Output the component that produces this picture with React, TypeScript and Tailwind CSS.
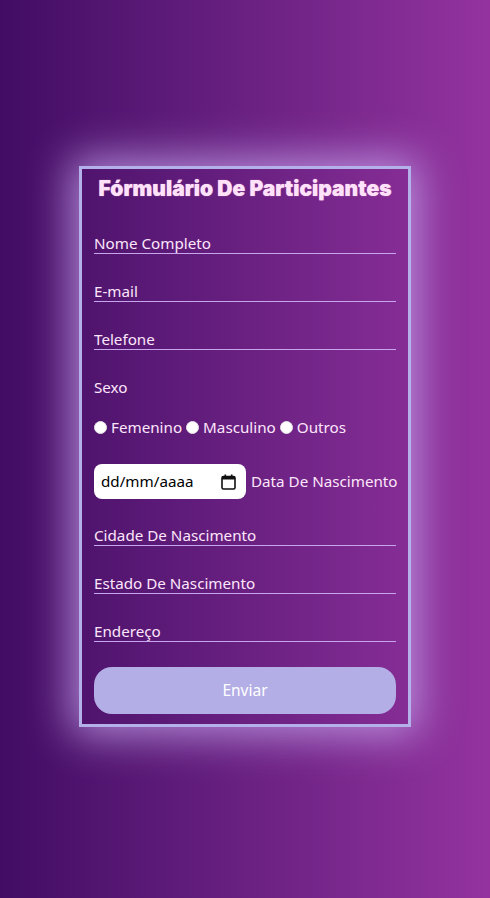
const fields1 = ['Nome Completo', 'E-mail', 'Telefone'];
const fields2 = ['Cidade De Nascimento', 'Estado De Nascimento', 'Endereço'];

const TextField = ({ label, mt }: { label: string; mt: string }) => (
  <input
    type="text"
    placeholder={label}
    className={`block w-full h-[22px] bg-transparent border-0 border-b border-[#c8a6ee] text-[15.2px] leading-[20px] text-[#fde6fb] placeholder:text-[#fde6fb] outline-none p-0 ${mt}`}
  />
);

const Radio = ({ label }: { label: string }) => (
  <label className="flex items-center gap-[4px]">
    <input type="radio" name="sexo" className="appearance-none w-[13px] h-[13px] rounded-full bg-white border border-[#e5e5e5] m-0" />
    <span>{label}</span>
  </label>
);

export default function App() {
  return (
    <div
      className="min-h-[898px] w-full bg-gradient-to-r from-[#420c64] to-[#94339f] flex justify-center pt-[166px] text-[#fde6fb]"
      style={{ fontFamily: '"Noto Sans", "Open Sans", sans-serif' }}
    >
      <form className="w-[332px] h-[561px] border-[3px] border-[#b4b1ea] shadow-[0_0_40px_8px_rgba(205,175,245,0.75)] px-[12px] pb-[10px]">
        <h1
          className="text-center text-[21px] leading-[40px] font-black text-[#fde2fa] [text-shadow:0_0_1px_#f9a8d4]"
          style={{ fontFamily: 'Inter, "Noto Sans", sans-serif' }}
        >
          Fórmulário De Participantes
        </h1>

        {fields1.map((f, i) => (
          <TextField key={f} label={f} mt={i === 0 ? 'mt-[23px]' : 'mt-[26px]'} />
        ))}

        <p className="mt-[27px] text-[15.2px] leading-[20px]">Sexo</p>

        <div className="mt-[20px] flex items-center gap-[4px] text-[15.2px] leading-[20px]">
          <Radio label="Femenino" />
          <Radio label="Masculino" />
          <Radio label="Outros" />
        </div>

        <div className="mt-[27px] flex items-center gap-[5px] text-[15.2px] whitespace-nowrap">
          <div className="shrink-0 w-[152px] h-[35px] rounded-lg bg-white flex items-center justify-between pl-[7px] pr-[10px] text-black">
            <span>dd/mm/aaaa</span>
            <svg width="15" height="16" viewBox="0 0 15 16" fill="none">
              <rect x="1" y="2.5" width="13" height="12.5" rx="1.5" stroke="#111" strokeWidth="1.6" />
              <rect x="1" y="2.5" width="13" height="3" fill="#111" />
              <rect x="3.5" y="0.5" width="1.6" height="3" fill="#111" />
              <rect x="9.9" y="0.5" width="1.6" height="3" fill="#111" />
            </svg>
          </div>
          <span>Data De Nascimento</span>
        </div>

        {fields2.map((f, i) => (
          <TextField key={f} label={f} mt={i === 0 ? 'mt-[25px]' : 'mt-[26px]'} />
        ))}

        <button
          type="button"
          className="mt-[25px] w-full h-[47px] rounded-[18px] bg-[#b3aee6] text-white text-[15.5px]"
        >
          Enviar
        </button>
      </form>
    </div>
  );
}
